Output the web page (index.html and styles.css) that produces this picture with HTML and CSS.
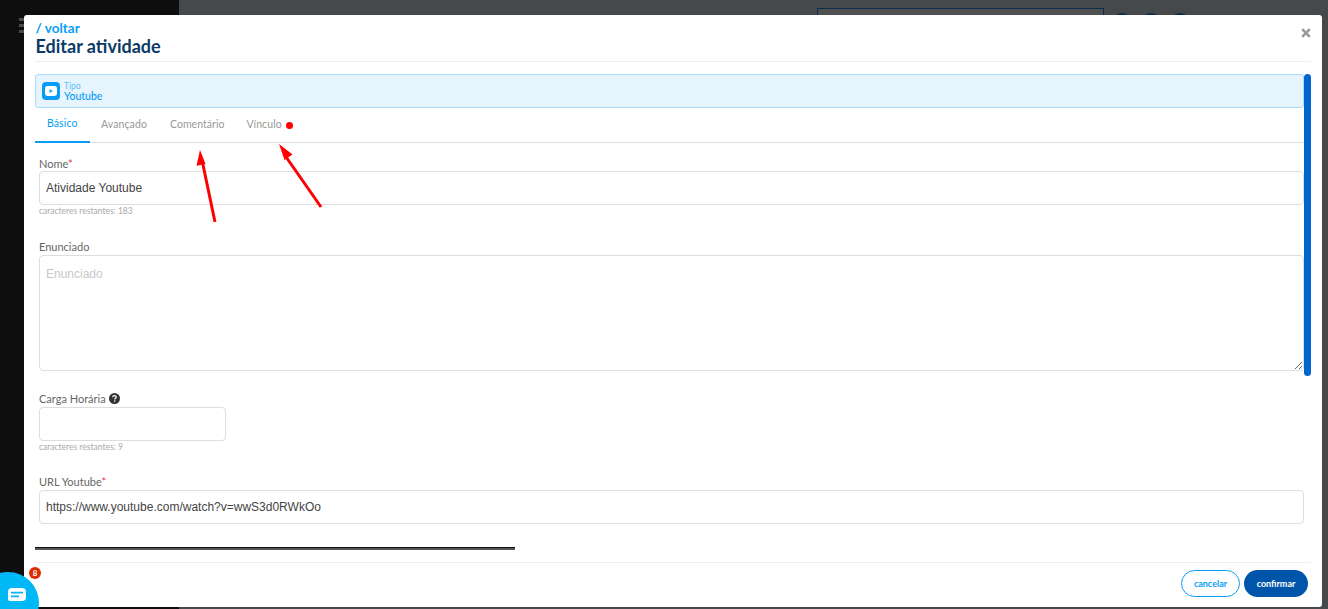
FILE: index.html
```html
<!DOCTYPE html>
<html lang="pt-BR">
<head>
<meta charset="utf-8">
<title>Editar atividade</title>
<link rel="stylesheet" href="styles.css">
</head>
<body>
<div class="backdrop">
  <aside class="side">
    <div class="side-icon"><span></span><span></span><span></span></div>
  </aside>
  <div class="main">
    <div class="search"></div>
    <div class="dots"><span></span><span></span><span></span></div>
  </div>
</div>

<section class="modal">
  <button class="close" type="button" aria-label="fechar">
    <svg width="10" height="10" viewBox="0 0 10 10"><path d="M1.2 1.2l7.6 7.6M8.8 1.2L1.2 8.8" stroke="#999" stroke-width="2.6"/></svg>
  </button>
  <header class="head">
    <a class="back">/ voltar</a>
    <h1 class="title">Editar atividade</h1>
  </header>
  <div class="body">
    <div class="type">
      <span class="type-icon">
        <svg width="12" height="10" viewBox="0 0 12 10"><rect width="12" height="10" rx="2.4" fill="#fff"/><path d="M4.6 3l3.2 2-3.2 2z" fill="#0a9cf5"/></svg>
      </span>
      <span class="type-text"><small>Tipo</small><b>Youtube</b></span>
    </div>
    <nav class="tabs">
      <a class="tab active">Básico</a>
      <a class="tab">Avançado</a>
      <a class="tab">Comentário</a>
      <a class="tab">Vínculo<i class="dot"></i></a>
    </nav>
    <form class="form">
      <div class="field f-nome">
        <label class="label">Nome<em>*</em></label>
        <input class="input" type="text" value="Atividade Youtube">
        <p class="hint">caracteres restantes: 183</p>
      </div>
      <div class="field f-enun">
        <label class="label">Enunciado</label>
        <textarea class="input area" placeholder="Enunciado"></textarea>
      </div>
      <div class="field f-carga">
        <label class="label">Carga Horária
          <svg class="help" width="11" height="11" viewBox="0 0 11 11"><circle cx="5.5" cy="5.5" r="5.5" fill="#333"/><path d="M3.7 4.2c0-1 .8-1.6 1.8-1.6s1.8.6 1.8 1.5c0 1.2-1.6 1.2-1.6 2.3" fill="none" stroke="#fff" stroke-width="1.2"/><rect x="5" y="7.4" width="1.3" height="1.3" fill="#fff"/></svg>
        </label>
        <input class="input short" type="text">
        <p class="hint">caracteres restantes: 9</p>
      </div>
      <div class="field f-url">
        <label class="label">URL Youtube<em>*</em></label>
        <input class="input" type="text" value="https://www.youtube.com/watch?v=wwS3d0RWkOo">
      </div>
    </form>
    <div class="rule"></div>
  </div>
  <footer class="foot">
    <button class="btn ghost" type="button">cancelar</button>
    <button class="btn solid" type="button">confirmar</button>
  </footer>
  <div class="scroll"></div>
</section>

<svg class="arrows" width="340" height="100" viewBox="0 0 340 100">
  <g fill="none" stroke="#f00" stroke-width="3"><path d="M215 72L202 10"/><path d="M321 57L284 4"/></g>
  <path d="M200 0l5.500 14-9 1.800z" fill="#f00"/>
  <path d="M279 -6l13.500 10.500-8 5.500z" fill="#f00"/>
</svg>

<div class="chat">
  <svg width="18" height="14" viewBox="0 0 18 14"><path d="M4 0h10a4 4 0 0 1 4 4v5a4 4 0 0 1-4 4H2a2 2 0 0 1-2-2V4a4 4 0 0 1 4-4z" fill="#fff"/><path d="M3 4.600h12M3 8.400h8" stroke="#00b8f5" stroke-width="1.600"/></svg>
  <span class="badge">8</span>
</div>
</body>
</html>
```
FILE: styles.css
```css
* { box-sizing: border-box; }
html, body { height: 100%; }
body {
  margin: 0;
  overflow: hidden;
  font-family: "Lato", "Noto Sans", sans-serif;
  color: #555;
  background: #45494c;
}
.backdrop { display: flex; height: 609px; }
.side { width: 179px; background: #0e0e0e; padding: 18px 0 0 19px; }
.side-icon { display: flex; flex-direction: column; gap: 3px; width: 8px; }
.side-icon span { height: 3px; background: #4a4a4a; }
.main { flex: 1; display: flex; align-items: flex-start; padding: 8px 0 0 638px; background: #45494c; }
.search { width: 287px; height: 30px; background: #505050; border: 1px solid #0d2c4d; }
.dots { display: flex; gap: 9px; margin: 5px 0 0 8px; }
.dots span { width: 20px; height: 20px; border-radius: 50%; background: #0d2c4d; }

.modal {
  position: absolute;
  left: 24px;
  top: 15px;
  width: 1298px;
  height: 592px;
  background: #fff;
  border-radius: 3px;
  display: flex;
  flex-direction: column;
  padding: 0 11px;
}
.close {
  position: absolute;
  right: 11px;
  top: 13px;
  padding: 0;
  border: 0;
  background: none;
  display: flex;
}
.head { height: 47px; padding: 5px 0 0 .5px; border-bottom: 1px solid #eee; flex: none; }
.back { display: block; font-size: 13.500px; line-height: 16px; font-weight: 700; color: #0a9cf5; }
.title { margin: 0; font-size: 18px; line-height: 20px; font-weight: 700; color: #0b3a66; }
.body { flex: 1; padding: 12px 7px 0 0; }
.type {
  height: 34px;
  display: flex;
  align-items: center;
  gap: 4px;
  padding-left: 6px;
  background: #e6f4fe;
  border: 1px solid #a8dcfb;
  border-radius: 3px;
}
.type-icon {
  width: 18px;
  height: 18px;
  border-radius: 4px;
  background: #0a9cf5;
  display: flex;
  align-items: center;
  justify-content: center;
}
.type-text { display: flex; flex-direction: column; color: #0a9cf5; }
.type-text small { font-size: 8.500px; line-height: 10px; color: #5dbdf8; }
.type-text b { font-size: 10.500px; line-height: 11px; font-weight: 500; }
.tabs { display: flex; height: 35px; border-bottom: 1px solid #ddd; }
.tab { font-size: 10.500px; line-height: 33px; color: #999; height: 35px; padding: 0 12px; margin-right: -1px; letter-spacing: .1px; white-space: nowrap; }
.tab:nth-child(3) { margin-right: -2px; letter-spacing: .05px; }
.tab.active { color: #0a9cf5; border-bottom: 2px solid #0a9cf5; line-height: 31px; width: 55px; }
.dot { display: inline-block; width: 7px; height: 7px; margin-left: 4px; border-radius: 50%; background: #f00; vertical-align: -1px; }
.form { display: flex; flex-direction: column; padding-left: 4px; }
.field { display: flex; flex-direction: column; }
.label { font-size: 11px; line-height: 13px; height: 15px; color: #666; white-space: nowrap; }
.label em { color: #e6354c; font-style: normal; }
.f-nome { padding-top: 14px; height: 97px; }
.f-nome .label { line-height: 14px; height: 14px; }
.f-enun { height: 143px; }
.f-carga { padding-top: 9px; height: 92px; }
.help { vertical-align: -1px; margin-left: 1px; }
.input {
  width: 100%;
  height: 34px;
  flex: none;
  border: 1px solid #ddd;
  border-radius: 4px;
  background: #fff;
  padding: 0 6px;
  font-family: "Liberation Sans", Arial, sans-serif;
  font-size: 12px;
  color: #444;
  outline: none;
}
.area { height: 116px; padding-top: 11px; resize: vertical; display: block; }
.area::placeholder { color: #c8c8c8; }
.short { width: 187px; }
.hint { margin: 1px 0 0; font-size: 8.500px; line-height: 11px; color: #aaa; }
.rule { width: 480px; height: 3px; margin-top: 23px; background: #555; border-top: 1px solid #111; }
.foot {
  height: 45px;
  flex: none;
  border-top: 1px solid #eee;
  display: flex;
  justify-content: flex-end;
  gap: 4px;
  padding: 7px 3px 0 0;
}
.btn {
  height: 27px;
  border-radius: 14px;
  font-family: inherit;
  font-size: 9px;
  font-weight: 700;
  padding: 0;
}
.ghost { width: 59px; background: #fff; border: 1px solid #0a9cf5; color: #0a9cf5; }
.solid { width: 64px; background: #0055aa; border: 0; color: #fff; }
.scroll { position: absolute; right: 11px; top: 59px; width: 7px; height: 302px; border-radius: 4px; background: #0065cc; }
.arrows { position: absolute; left: 0; top: 150px; overflow: visible; }
.chat {
  position: absolute;
  left: -23px;
  top: 572px;
  width: 62px;
  height: 62px;
  border-radius: 50%;
  background: #00b8f5;
  display: flex;
  padding: 16px 0 0 31px;
}
.badge {
  position: absolute;
  left: 52px;
  top: -5px;
  width: 12px;
  height: 12px;
  border-radius: 50%;
  background: #dd2c00;
  box-shadow: 0 0 0 1.500px #fff;
  color: #fff;
  font-size: 8px;
  font-weight: 700;
  line-height: 12px;
  text-align: center;
}
```
